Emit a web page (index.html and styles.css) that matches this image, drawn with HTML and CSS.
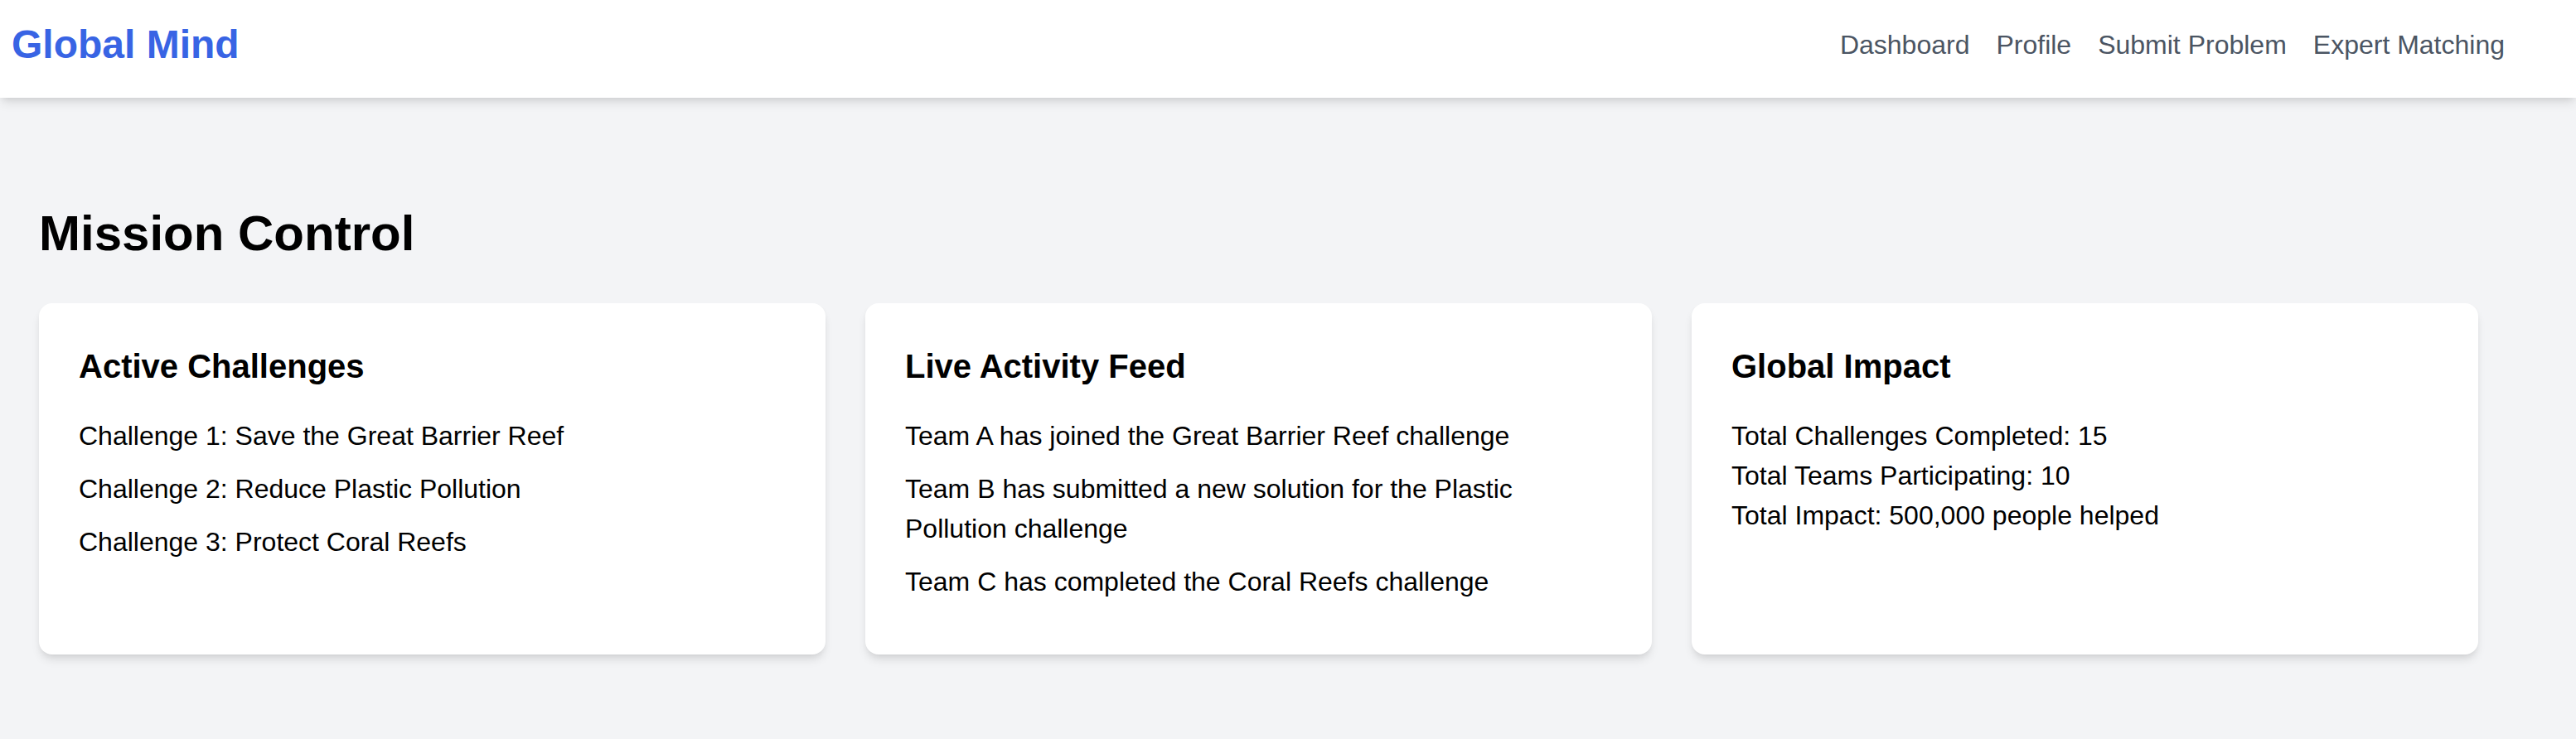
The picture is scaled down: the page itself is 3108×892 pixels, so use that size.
FILE: index.html
```html
<!DOCTYPE html>
<html lang="en">
<head>
<meta charset="utf-8">
<title>Global Mind</title>
<link rel="stylesheet" href="styles.css">
</head>
<body>
<nav class="topbar">
  <a class="logo" href="#">Global Mind</a>
  <ul class="links">
    <li><a href="#">Dashboard</a></li>
    <li><a href="#">Profile</a></li>
    <li><a href="#">Submit Problem</a></li>
    <li><a href="#">Expert Matching</a></li>
  </ul>
</nav>
<main class="main">
  <h1 class="title">Mission Control</h1>
  <div class="grid">
    <section class="card">
      <h2 class="card-title">Active Challenges</h2>
      <ul class="items">
        <li>Challenge 1: Save the Great Barrier Reef</li>
        <li>Challenge 2: Reduce Plastic Pollution</li>
        <li>Challenge 3: Protect Coral Reefs</li>
      </ul>
    </section>
    <section class="card">
      <h2 class="card-title">Live Activity Feed</h2>
      <ul class="items">
        <li>Team A has joined the Great Barrier Reef challenge</li>
        <li>Team B has submitted a new solution for the Plastic Pollution challenge</li>
        <li>Team C has completed the Coral Reefs challenge</li>
      </ul>
    </section>
    <section class="card">
      <h2 class="card-title">Global Impact</h2>
      <div class="stats">
        <p>Total Challenges Completed: 15</p>
        <p>Total Teams Participating: 10</p>
        <p>Total Impact: 500,000 people helped</p>
      </div>
    </section>
  </div>
</main>
</body>
</html>
```

FILE: styles.css
```css
* { box-sizing: border-box; }
html, body {
  margin: 0;
  padding: 0;
}
body {
  background: #f3f4f6;
  font-family: "Liberation Sans", Arial, Helvetica, sans-serif;
  color: #000;
  min-height: 892px;
}
a { text-decoration: none; }

.topbar {
  display: flex;
  align-items: center;
  justify-content: space-between;
  height: 118px;
  padding: 22px 86px 32px 14px;
  background: #fff;
  box-shadow: 0 8px 12px -2px rgba(0,0,0,0.1), 0 4px 8px -4px rgba(0,0,0,0.1);
  position: relative;
}
.logo {
  font-size: 48px;
  line-height: 64px;
  font-weight: 700;
  color: #3864e4;
}
.links {
  display: flex;
  gap: 32px;
  list-style: none;
  margin: 0;
  padding: 0;
}
.links a {
  font-size: 32px;
  line-height: 48px;
  color: #4b5563;
}

.main {
  padding: 128px 118px 48px 47px;
}
.title {
  margin: 0 0 48px 0;
  font-size: 60px;
  line-height: 72px;
  font-weight: 700;
}
.grid {
  display: grid;
  grid-template-columns: repeat(3, 1fr);
  gap: 48px;
}
.card {
  background: #fff;
  border-radius: 16px;
  padding: 48px;
  box-shadow: 0 8px 12px -2px rgba(0,0,0,0.1), 0 4px 8px -4px rgba(0,0,0,0.1);
}
.card-title {
  margin: 0 0 32px 0;
  font-size: 40px;
  line-height: 56px;
  font-weight: 700;
}
.items {
  list-style: none;
  margin: 0;
  padding: 0;
}
.items li {
  font-size: 32px;
  line-height: 48px;
  margin-bottom: 16px;
}
.stats p {
  margin: 0;
  font-size: 32px;
  line-height: 48px;
}
```
